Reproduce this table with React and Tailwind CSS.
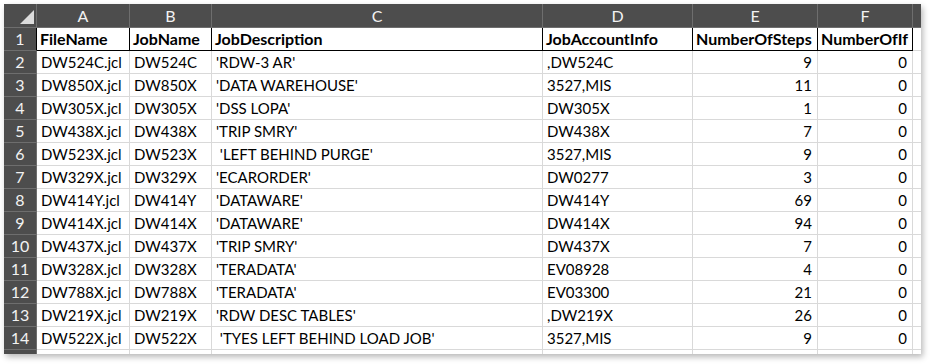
import React from 'react';

const cols = ['A', 'B', 'C', 'D', 'E', 'F'];

const header = ['FileName', 'JobName', 'JobDescription', 'JobAccountInfo', 'NumberOfSteps', 'NumberOfIf'];

const rows = [
  ['DW524C.jcl', 'DW524C', "'RDW-3 AR'", ',DW524C', 9, 0],
  ['DW850X.jcl', 'DW850X', "'DATA WAREHOUSE'", '3527,MIS', 11, 0],
  ['DW305X.jcl', 'DW305X', "'DSS LOPA'", 'DW305X', 1, 0],
  ['DW438X.jcl', 'DW438X', "'TRIP SMRY'", 'DW438X', 7, 0],
  ['DW523X.jcl', 'DW523X', "\u00a0'LEFT BEHIND PURGE'", '3527,MIS', 9, 0],
  ['DW329X.jcl', 'DW329X', "'ECARORDER'", 'DW0277', 3, 0],
  ['DW414Y.jcl', 'DW414Y', "'DATAWARE'", 'DW414Y', 69, 0],
  ['DW414X.jcl', 'DW414X', "'DATAWARE'", 'DW414X', 94, 0],
  ['DW437X.jcl', 'DW437X', "'TRIP SMRY'", 'DW437X', 7, 0],
  ['DW328X.jcl', 'DW328X', "'TERADATA'", 'EV08928', 4, 0],
  ['DW788X.jcl', 'DW788X', "'TERADATA'", 'EV03300', 21, 0],
  ['DW219X.jcl', 'DW219X', "'RDW DESC TABLES'", ',DW219X', 26, 0],
  ['DW522X.jcl', 'DW522X', "\u00a0'TYES LEFT BEHIND LOAD JOB'", '3527,MIS', 9, 0],
];

const rowHead = 'h-[23px] border-b border-r border-[#6e6e6e] bg-[#4d4d4d] text-[#f2f2f2] text-center leading-[22px]';
const cell = 'h-[23px] border-b border-r border-[#d9d9d9] px-[4px] leading-[22px] whitespace-nowrap overflow-hidden';

export default function App() {
  return (
    <div className="w-[931px] h-[364px] bg-white p-[4px]" style={{ fontFamily: 'Lato, "Open Sans", sans-serif' }}>
      <div className="w-[917px] h-[350px] overflow-hidden bg-white shadow-[2px_3px_6px_rgba(0,0,0,0.28)] text-[15px] text-black">
        <div className="grid grid-cols-[33px_93px_82px_331px_150px_125px_95px_8px]">
          {/* column letters */}
          <div className="h-[24px] border-r border-b border-[#6e6e6e] bg-[#4d4d4d] relative">
            <svg className="absolute left-[16px] top-[6px]" width="14" height="14" viewBox="0 0 14 14">
              <polygon points="14,0 14,14 0,14" fill="#dcdcdc" />
            </svg>
          </div>
          {cols.map(c => (
            <div key={c} className="h-[24px] border-r border-b border-[#6e6e6e] bg-[#4d4d4d] text-[#f2f2f2] text-[16px] text-center leading-[23px]">
              {c}
            </div>
          ))}
          <div className="h-[24px] border-b border-[#6e6e6e] bg-[#4d4d4d]" />

          {/* header row */}
          <div className={`${rowHead} text-[16px] !border-r-black`}>1</div>
          {header.map(h => (
            <div key={h} className="h-[23px] border-b border-r border-black px-[3px] text-[16px] leading-[22px] font-bold whitespace-nowrap overflow-hidden">
              {h}
            </div>
          ))}
          <div className="h-[23px] border-b border-[#d9d9d9]" />

          {rows.map((r, i) => (
            <React.Fragment key={i}>
              <div className={`${rowHead} text-[16px]`}>{i + 2}</div>
              {r.map((v, j) => (
                <div key={j} className={`${cell} ${j >= 4 ? 'text-right pr-[5px]' : ''}`}>
                  {v}
                </div>
              ))}
              <div className="h-[23px] border-b border-[#d9d9d9]" />
            </React.Fragment>
          ))}

          {/* partly visible row 15 */}
          <div className="h-[23px] border-r border-[#6e6e6e] bg-[#4d4d4d]" />
          {cols.map(c => (
            <div key={c} className="h-[23px] border-r border-[#d9d9d9]" />
          ))}
          <div className="h-[23px]" />
        </div>
      </div>
    </div>
  );
}
